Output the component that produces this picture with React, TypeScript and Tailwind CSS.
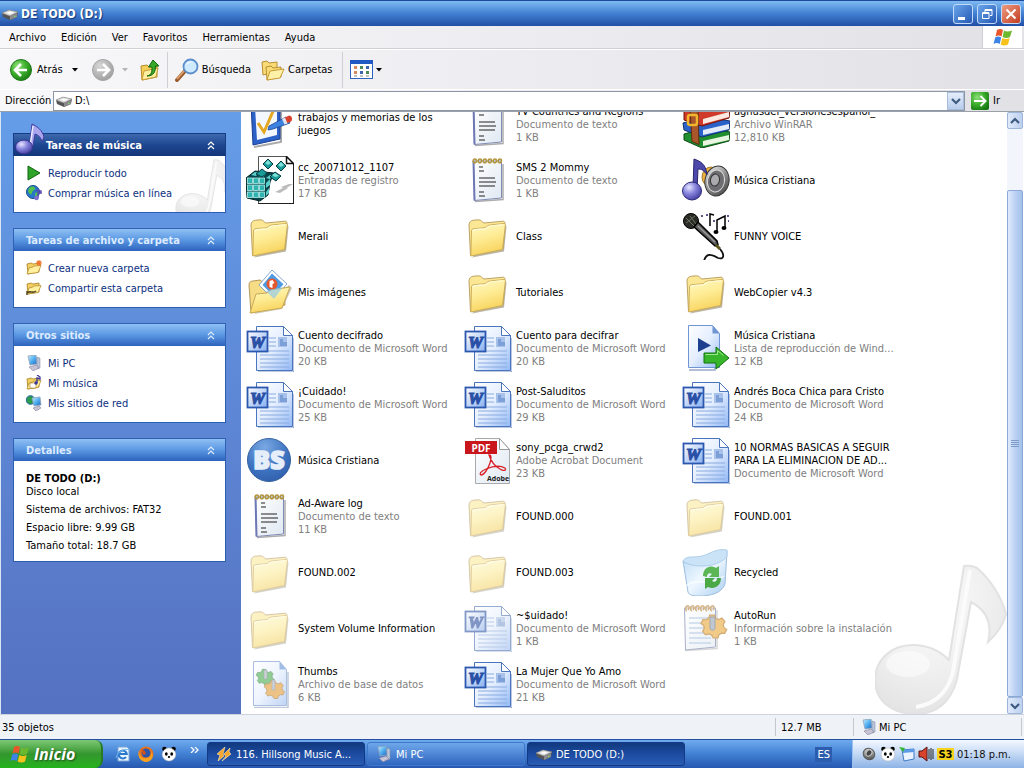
import React from 'react';

type IconName =
  | 'folder'
  | 'pictures'
  | 'word'
  | 'text'
  | 'tasks'
  | 'registry'
  | 'rar'
  | 'music'
  | 'mic'
  | 'playlist'
  | 'bs'
  | 'pdf'
  | 'recycle'
  | 'setup'
  | 'database';

interface FileItem {
  name: string;
  icon: IconName;
  type?: string;
  size?: string;
  hidden?: boolean;
}

const WORD = 'Documento de Microsoft Word';

const files: FileItem[] = [
  { name: 'trabajos y memorias de los juegos', icon: 'tasks' },
  { name: 'TV Countries and Regions', icon: 'text', type: 'Documento de texto', size: '1 KB' },
  { name: 'agnusdei_versionesespañol_', icon: 'rar', type: 'Archivo WinRAR', size: '12,810 KB' },
  { name: 'cc_20071012_1107', icon: 'registry', type: 'Entradas de registro', size: '17 KB' },
  { name: 'SMS 2 Mommy', icon: 'text', type: 'Documento de texto', size: '1 KB' },
  { name: 'Música Cristiana', icon: 'music' },
  { name: 'Merali', icon: 'folder' },
  { name: 'Class', icon: 'folder' },
  { name: 'FUNNY VOICE', icon: 'mic' },
  { name: 'Mis imágenes', icon: 'pictures' },
  { name: 'Tutoriales', icon: 'folder' },
  { name: 'WebCopier v4.3', icon: 'folder' },
  { name: 'Cuento decifrado', icon: 'word', type: WORD, size: '20 KB' },
  { name: 'Cuento para decifrar', icon: 'word', type: WORD, size: '20 KB' },
  { name: 'Música Cristiana', icon: 'playlist', type: 'Lista de reproducción de Wind...', size: '12 KB' },
  { name: '¡Cuidado!', icon: 'word', type: WORD, size: '25 KB' },
  { name: 'Post-Saluditos', icon: 'word', type: WORD, size: '29 KB' },
  { name: 'Andrés Boca Chica para Cristo', icon: 'word', type: WORD, size: '24 KB' },
  { name: 'Música Cristiana', icon: 'bs' },
  { name: 'sony_pcga_crwd2', icon: 'pdf', type: 'Adobe Acrobat Document', size: '23 KB' },
  { name: '10 NORMAS BASICAS A SEGUIR PARA LA ELIMINACION DE AD...', icon: 'word', type: WORD },
  { name: 'Ad-Aware log', icon: 'text', type: 'Documento de texto', size: '11 KB' },
  { name: 'FOUND.000', icon: 'folder', hidden: true },
  { name: 'FOUND.001', icon: 'folder', hidden: true },
  { name: 'FOUND.002', icon: 'folder', hidden: true },
  { name: 'FOUND.003', icon: 'folder', hidden: true },
  { name: 'Recycled', icon: 'recycle' },
  { name: 'System Volume Information', icon: 'folder', hidden: true },
  { name: '~$uidado!', icon: 'word', type: WORD, size: '1 KB', hidden: true },
  { name: 'AutoRun', icon: 'setup', type: 'Información sobre la instalación', size: '1 KB', hidden: true },
  { name: 'Thumbs', icon: 'database', type: 'Archivo de base de datos', size: '6 KB', hidden: true },
  { name: 'La Mujer Que Yo Amo', icon: 'word', type: WORD, size: '21 KB' },
];

const Gradients = () => (
  <svg width="0" height="0" className="absolute" aria-hidden="true">
    <defs>
      <linearGradient id="gFolder" x1="0" y1="0" x2="0.3" y2="1">
        <stop offset="0" stopColor="#fff9c4" />
        <stop offset="0.5" stopColor="#feec96" />
        <stop offset="1" stopColor="#f8d45f" />
      </linearGradient>
      <linearGradient id="gPage" x1="0" y1="0" x2="1" y2="1">
        <stop offset="0" stopColor="#ffffff" />
        <stop offset="0.5" stopColor="#e4eeff" />
        <stop offset="1" stopColor="#93b9f6" />
      </linearGradient>
      <linearGradient id="gSheet" x1="0" y1="0" x2="1" y2="1">
        <stop offset="0" stopColor="#ffffff" />
        <stop offset="1" stopColor="#dfe8f2" />
      </linearGradient>
      <linearGradient id="gWord" x1="0" y1="0" x2="1" y2="1">
        <stop offset="0" stopColor="#ffffff" />
        <stop offset="1" stopColor="#86aef0" />
      </linearGradient>
      <radialGradient id="gGreen" cx="0.35" cy="0.3" r="0.8">
        <stop offset="0" stopColor="#8fe07a" />
        <stop offset="0.5" stopColor="#3cae2c" />
        <stop offset="1" stopColor="#15750f" />
      </radialGradient>
      <radialGradient id="gGray" cx="0.35" cy="0.3" r="0.8">
        <stop offset="0" stopColor="#d6d6d6" />
        <stop offset="1" stopColor="#9b9b9b" />
      </radialGradient>
      <radialGradient id="gBs" cx="0.4" cy="0.2" r="0.9">
        <stop offset="0" stopColor="#79a8e2" />
        <stop offset="0.6" stopColor="#3d72c0" />
        <stop offset="1" stopColor="#2f5ca8" />
      </radialGradient>
      <radialGradient id="gNote" cx="0.35" cy="0.3" r="0.8">
        <stop offset="0" stopColor="#e6e6ff" />
        <stop offset="0.45" stopColor="#8683dc" />
        <stop offset="1" stopColor="#3a3596" />
      </radialGradient>
      <radialGradient id="gMark" cx="0.4" cy="0.25" r="0.8">
        <stop offset="0" stopColor="#fdfdfd" />
        <stop offset="0.6" stopColor="#efefef" />
        <stop offset="1" stopColor="#e2e2e2" />
      </radialGradient>
      <linearGradient id="gScreen" x1="0" y1="0" x2="1" y2="1">
        <stop offset="0" stopColor="#d3f1ff" />
        <stop offset="0.5" stopColor="#53b1f0" />
        <stop offset="1" stopColor="#1c66c4" />
      </linearGradient>
      <linearGradient id="gBin" x1="0" y1="0" x2="1" y2="1">
        <stop offset="0" stopColor="#b7d9f5" />
        <stop offset="0.5" stopColor="#eef7ff" />
        <stop offset="1" stopColor="#a8cdf0" />
      </linearGradient>
      <linearGradient id="gMetal" x1="0" y1="0" x2="1" y2="1">
        <stop offset="0" stopColor="#f4f4f4" />
        <stop offset="0.5" stopColor="#8c8c8c" />
        <stop offset="1" stopColor="#3d3d3d" />
      </linearGradient>
    </defs>
  </svg>
);

const gearPath =
  'M-2 -9h4l1 2.6 2.6 1 2.6-1.2 2.6 3-1.4 2.4.6 2.6 2.2 1.4-1.6 3.4-2.8-.2-2.2 1.6-.6 2.4h-4l-1.2-2.4-2.4-1-2.8.8-2.4-3 1.4-2.4-.6-2.6-2.2-1.4 1.6-3.4 2.8.2 2.2-1.6z';

const FolderShape = () => (
  <>
    <path d="M8 45.500l32-6 2.500-25-2-2" fill="#8d8468" opacity="0.6" />
    <path d="M5 13c0-3 2-4.500 4.500-4.800l5-.4c2.500-.2 3.500 2.400 5.500 3.200l19-1.800c1.500 0 2 1 2 2.500l-2 25L6.500 43.500z" fill="#fce894" stroke="#b4975a" strokeWidth="0.900" />
    <path d="M7.500 19c0-1.500 1-2.200 2.500-2.400l10-.8c2 0 3-2.500 5.500-2.800l14.500-1.500c1 0 1.500.6 1.400 1.600L38.500 37.500 6.800 44z" fill="url(#gFolder)" stroke="#c9a956" strokeWidth="0.900" />
    <path d="M8.800 19.500c.3-1.200 1-1.700 2-1.800l10-.8c2.500-.4 3-2.600 5.500-2.900l13-1.300" fill="none" stroke="#fffbd8" strokeWidth="1.200" />
  </>
);

const FileIcon = ({ name }: { name: IconName }) => {
  switch (name) {
    case 'folder':
      return <FolderShape />;
    case 'pictures':
      return (
        <>
          <path d="M8 46l28-5 10-21-3-3" fill="#8d8468" opacity="0.45" />
          <path d="M3 17c0-3 2-4 4-4l7-1 4 3 20-2 1 24L5 45z" fill="#f7dc86" stroke="#b4975a" />
          <path d="M26 2l15 14-14 15-14-14z" fill="#fff" stroke="#8aa7cc" />
          <path d="M26 5.500l11.500 10.700L27 27.500 16.500 17z" fill="#4f9be3" />
          <circle cx="26" cy="16" r="5.500" fill="#e4572c" />
          <path d="M23.500 13l3-1 2 3-2 1v4l-3-1z" fill="#fff" />
          <path d="M4 45l6-19 11-1 4-3 19-3-8 21z" fill="url(#gFolder)" stroke="#c9a956" />
          <path d="M20 23l8 8 9-12z" fill="#8cc6ee" opacity="0.65" />
        </>
      );
    case 'word':
      return (
        <>
          <path d="M12 48h36V14" fill="none" stroke="#3b62ad" strokeWidth="1" opacity="0.7" />
          <path d="M10.500 2.500h27l9 9v35h-36z" fill="url(#gPage)" stroke="#4b75bd" />
          <path d="M37.500 2.500v9h9z" fill="#fff" stroke="#4b75bd" />
          <path d="M23 14h7M23 18h7M23 22h7M14 27h29M14 31h29M14 35h29M14 39h29M14 43h29" stroke="#8aabde" strokeWidth="1" />
          <path d="M32 13h9v10h-9z" fill="#a7c1ea" />
          <path d="M34 15h3v3h4v4h-7z" fill="#7c9fd8" />
          <rect x="1.500" y="7.500" width="20" height="20" fill="url(#gWord)" stroke="#2c57ae" strokeWidth="1.800" />
          <text x="11.500" y="23.500" textAnchor="middle" fontFamily="Liberation Serif, serif" fontStyle="italic" fontWeight="700" fontSize="17" fill="#2a50a6" stroke="#2a50a6" strokeWidth="1.200">W</text>
        </>
      );
    case 'text':
      return (
        <>
          <path d="M11 45.500l28-2V8" fill="none" stroke="#777" strokeWidth="1.500" opacity="0.6" />
          <path d="M9.500 5h28v37l-27 2.500z" fill="url(#gSheet)" stroke="#7f8bb5" />
          <path d="M9.500 5l1 39.500" stroke="#6d78b4" strokeWidth="2" />
          {[11, 16, 21, 26, 31, 36].map((x) => (
            <path key={x} d={`M${x} 7c-3-1-2-4 0-4s2 3 0 4`} fill="none" stroke="#b3953c" strokeWidth="1.600" />
          ))}
          <path d="M15 11h4M15 15h5M15 22h16M15 26h17M15 30h16M15 36h5M15 40h6" stroke="#222" strokeWidth="1.200" />
        </>
      );
    case 'tasks':
      return (
        <>
          <path d="M8 47l27-5V4" fill="none" stroke="#555" strokeWidth="2" opacity="0.5" />
          <path d="M5 3l29-2v38L7 45z" fill="#2c62c8" stroke="#1a3f90" />
          <path d="M9 7l22-2v30L11 40z" fill="#f3f8ff" />
          <path d="M12 23l6 9L28 9" fill="none" stroke="#e5a823" strokeWidth="3" />
          <path d="M23 26l17-9 4 6-17 6-5 1z" fill="#3c82e0" stroke="#1b4698" strokeWidth="0.800" />
          <path d="M38 18l5-2.500c3 0 4 4 2 6l-4 1.800z" fill="#d8402c" />
          <path d="M36 19l3-1.500 2.500 6-3 1z" fill="#dfe4ee" />
        </>
      );
    case 'registry':
      return (
        <>
          <path d="M12.500.5h28l7 7v40h-35z" fill="#fff" stroke="#555" />
          <path d="M40.500.5v7h7zM48 8v40H12" fill="none" stroke="#111" strokeWidth="1.500" />
          <path d="M29 36l8-4h5l-8 5zM35 31l8-3h4l-8 5z" fill="#bbb" />
          <path d="M0 22l9-7 19 2-4 9-2 13-8 6-13-3z" fill="#06444a" stroke="#022529" />
          {[22, 29, 36].map((y) =>
            [1.5, 7.5, 13.5].map((x) => <rect key={`${x}-${y}`} x={x} y={y} width="5" height="5.500" fill="#2fb3b0" stroke="#b4efec" strokeWidth="0.800" />),
          )}
          <path d="M5 19l4-3 4 1-3 3zM12 20l4-3 4 1-3 3zM20 22l4-3 3 1-3 3zM20 27l4-4v6l-4 3zM20 36l3-4v5l-3 3z" fill="#5ccfca" />
          <path d="M22 3l5 5-5 5-5-5zM35 5l5 5-5 5-5-5zM29 16l6 4-5 5-6-4zM16 13l5 4-5 4-6-3z" fill="#1a9a99" stroke="#043c40" />
          <path d="M22 4l3 3-3 2-3-2zM35 6l3 3-3 2-3-2zM29 17l4 3-4 1-3-2z" fill="#7fe0da" />
        </>
      );
    case 'rar':
      return (
        <>
          <path d="M2 34l22-6 24 4-1 9-27 7-18-8z" fill="#1f8e2e" stroke="#0d4a15" />
          <path d="M21 41l26-6v5l-26 6z" fill="#e8f5e0" />
          <path d="M1 23l22-6 25 4-1 9-27 7-18-7z" fill="#2a62c9" stroke="#12326f" />
          <path d="M21 30l26-6v5l-26 6z" fill="#e4ecfb" />
          <path d="M2 11l22-7 24 5-1 9-27 8L2 20z" fill="#d03a2a" stroke="#721309" />
          <path d="M21 19l26-7v5l-26 7z" fill="#fbe9e2" />
          <path d="M8 9l8-2.500 1 38-7-3z" fill="#a9562a" stroke="#5f2c10" />
          <rect x="6" y="15" width="9" height="10" rx="2" fill="none" stroke="#f1b62b" strokeWidth="2.500" />
        </>
      );
    case 'music':
      return (
        <>
          <ellipse cx="29" cy="21" rx="9" ry="10" fill="#eab040" stroke="#8d6413" strokeWidth="0.800" />
          <ellipse cx="35" cy="25" rx="12" ry="15" fill="url(#gMetal)" stroke="#333" transform="rotate(12 35 25)" />
          <ellipse cx="34" cy="25" rx="8.500" ry="11" fill="#6e6e72" stroke="#d8d8d8" transform="rotate(12 34 25)" />
          <ellipse cx="33" cy="24" rx="4.500" ry="6" fill="#a9a9ae" stroke="#333" transform="rotate(12 33 24)" />
          <path d="M12 3c5 2 12 4 13 16-3-5-6-6-9-6l-1 22-4-3z" fill="#4d49ab" stroke="#29266f" />
          <ellipse cx="10" cy="35" rx="9.500" ry="9" fill="url(#gNote)" stroke="#2c2876" />
        </>
      );
    case 'mic':
      return (
        <>
          <circle cx="9" cy="9" r="7.500" fill="#2a2a26" stroke="#000" />
          <path d="M4 6l8 8M8 4l6 8M4 11l9-7" stroke="#6d7362" strokeWidth="1" />
          <path d="M12 15l4-5 19 19 1 4-3 1z" fill="#5b5b5b" stroke="#000" strokeWidth="1.500" />
          <path d="M16 14l17 16" stroke="#9a9a9a" strokeWidth="1.500" />
          <path d="M34 33l4 4" stroke="#5d571f" strokeWidth="3" />
          <path d="M38 37c5 6 4 11-2 9-7-4-12-5-14 3" fill="none" stroke="#111" strokeWidth="1.800" />
          <path d="M28 14V2l4 1M35 20V8l8-4v12" fill="none" stroke="#000" strokeWidth="1.500" />
          <ellipse cx="34" cy="20" rx="2.500" ry="2" />
          <ellipse cx="42" cy="16" rx="2.500" ry="2" />
          <path d="M19 4h2M24 3h2M31 9h2M45 4h2M46 9h1" stroke="#22226a" strokeWidth="1.500" />
        </>
      );
    case 'playlist':
      return (
        <>
          <path d="M7 46h26V12" fill="none" stroke="#5672a8" strokeWidth="1.500" opacity="0.6" />
          <path d="M6.500 1.500h24l7 8v34h-31z" fill="url(#gPage)" stroke="#6f95d2" />
          <path d="M30.500 1.500v8h7z" fill="#6f95d2" />
          <path d="M16 14l13 7.500L16 28z" fill="#1d3f8f" />
          <path d="M22 29h12v-6l13 11-13 11v-6H22z" fill="#37b52b" stroke="#13730f" />
          <path d="M23.500 30.500h12v-4l6 5" fill="none" stroke="#a0ea8e" />
        </>
      );
    case 'bs':
      return (
        <>
          <circle cx="23" cy="24" r="21.500" fill="url(#gBs)" stroke="#34619f" />
          <text x="23" y="33" textAnchor="middle" fontFamily="Open Sans, sans-serif" fontWeight="800" fontSize="25" fill="#e6eefa" stroke="#e6eefa" strokeWidth="1.500">BS</text>
        </>
      );
    case 'pdf':
      return (
        <>
          <path d="M11.500 2.500h24l10 11v34h-34z" fill="url(#gSheet)" stroke="#a9a9a9" />
          <path d="M35.500 2.500v11h10z" fill="#fff" stroke="#999" />
          <rect x="1" y="5" width="32" height="13" fill="#c9161c" />
          <text x="17" y="15.500" textAnchor="middle" fontFamily="Open Sans, sans-serif" fontWeight="700" fontSize="10" fill="#fff">PDF</text>
          <path d="M25 19c3 0 2 4 1 8-2 6-6 12-9 12-2-1 0-4 5-6 7-3 14-4 19-1 2 3-2 3-5 1-6-3-9-8-11-14z" fill="none" stroke="#d91f26" strokeWidth="1.300" />
          <text x="34" y="45" textAnchor="middle" fontFamily="Open Sans, sans-serif" fontWeight="700" fontSize="7" fill="#222">Adobe</text>
        </>
      );
    case 'recycle':
      return (
        <>
          <path d="M1 13c4 3 10 4 16 2 11-4 14-13 28-12l-2 33c-3 9-14 12-26 12-6 0-10-1-11-4z" fill="url(#gBin)" stroke="#9dbfdf" />
          <path d="M1 13C4 7 12 10 20 8c8-2 14-8 25-6v7c-7 6-14 9-24 9-8 0-15-1-20-5z" fill="#cbe3f7" stroke="#a3c6e6" strokeWidth="0.800" />
          <path d="M4 38c12-10 22 2 38-10" fill="none" stroke="#fff" strokeWidth="2" opacity="0.6" />
          <path d="M21 28c0-8 7-12 13-8l3-2v11H27l3-3c-3-2-5 0-5 3z" fill="#5cb655" />
          <path d="M39 30c0 8-7 12-13 9l-3 2V30h10l-3 3c3 2 5 0 5-3z" fill="#4aa845" />
        </>
      );
    case 'setup':
      return (
        <>
          <path d="M3 46.500l32-2V6" fill="none" stroke="#777" strokeWidth="1.500" opacity="0.5" />
          <path d="M2.500 4h31v39l-30 3z" fill="url(#gSheet)" stroke="#6f7ba8" />
          {[5, 10, 15, 20, 25, 30].map((x) => (
            <path key={x} d={`M${x} 7c-2-1-2-4 0-5s3 2 1 4`} fill="none" stroke="#c2842a" strokeWidth="1.500" />
          ))}
          <path d="M7 14h22M7 19h22M7 24h22M7 29h22M7 34h22M7 39h22" stroke="#7fa5d8" />
          <path d={gearPath} transform="translate(30 22) scale(1.200)" fill="#eda62a" stroke="#b97412" />
          <path d="M28 13h5v11c0 3-5 3-5 0z" fill="#97a3b4" stroke="#66717f" />
        </>
      );
    case 'database':
      return (
        <>
          <path d="M8 47.500h34V12" fill="none" stroke="#4e6b9c" strokeWidth="1.500" opacity="0.6" />
          <path d="M7.500 1.500h26l7 8v36h-33z" fill="url(#gPage)" stroke="#6f95d2" />
          <path d="M33.500 1.500v8h7z" fill="#5f92dc" />
          <path d={gearPath} transform="translate(18 17) scale(0.850)" fill="#3fae45" stroke="#21742a" strokeWidth="0.800" />
          <path d={gearPath} transform="translate(27 29) scale(0.950)" fill="#e79a2c" stroke="#a8660f" strokeWidth="0.800" />
          <path d="M18 10h3v9h-3zM26 20h3v10h-3z" fill="#aab2bd" stroke="#6d7683" strokeWidth="0.500" />
        </>
      );
  }
};

const MusicNote = ({ className }: { className: string }) => (
  <svg viewBox="0 0 132 150" className={className} aria-hidden="true">
    <path d="M89 2c5-1 9 0 13 2 14 12 25 30 29 46-3 12-9 20-18 28 5-20-2-32-17-40l-12 66c-3 28-18 46-43 46C16 150 0 136 0 116c0-20 16-35 38-35 14 0 26 5 36 15z" fill="url(#gMark)" stroke="#e2e2e2" strokeWidth="2" />
    <path d="M95 6L79 102c-3 22-16 38-38 41" fill="none" stroke="#fbfbfb" strokeWidth="4" />
    <ellipse cx="33" cy="100" rx="22" ry="13" fill="#fff" opacity="0.5" />
  </svg>
);

const DriveIcon = () => (
  <svg viewBox="0 0 16 16" className="size-4 shrink-0" aria-hidden="true">
    <path d="M0 7l7-3 9 2-1 5-7 3-7-3z" fill="#555" />
    <path d="M0 7l7-3 9 2-8 4z" fill="#d9d9d9" stroke="#8b8b8b" strokeWidth="0.500" />
    <path d="M4 7l4-1.500 4 1L8 8z" fill="#fff" />
    <path d="M8 10l7-3v4l-7 3z" fill="#8a8a8a" />
    <path d="M12 10.500h1.500" stroke="#6de05e" />
  </svg>
);

const PcIcon = () => (
  <svg viewBox="0 0 16 16" className="size-4 shrink-0" aria-hidden="true">
    <path d="M2 1l8-1 1 9-7 1z" fill="url(#gScreen)" stroke="#8fa3bd" strokeWidth="0.800" />
    <path d="M11 2l3 1v10l-3 1z" fill="#b8c3d6" stroke="#7d8ba5" strokeWidth="0.500" />
    <path d="M3 12l7-2 3 3-6 3z" fill="#c7c3d6" stroke="#77708d" strokeWidth="0.500" />
  </svg>
);

const PandaIcon = () => (
  <svg viewBox="0 0 16 16" className="size-4 shrink-0" aria-hidden="true">
    <circle cx="3.500" cy="3" r="2.300" />
    <circle cx="12.500" cy="3" r="2.300" />
    <ellipse cx="8" cy="8.500" rx="6.800" ry="6.500" fill="#fff" stroke="#bbb" strokeWidth="0.500" />
    <ellipse cx="5.300" cy="8" rx="1.400" ry="1.800" />
    <ellipse cx="10.700" cy="8" rx="1.400" ry="1.800" />
    <ellipse cx="8" cy="11" rx="1.200" ry="0.900" />
  </svg>
);

const WindowsFlag = ({ className }: { className: string }) => (
  <svg viewBox="0 0 20 18" className={className} aria-hidden="true">
    <path d="M4 2c2-1.500 4-1.500 6 0L8.500 8.500c-2-1.300-4-1.300-6 0z" fill="#e8562a" />
    <path d="M11 2.500c2 1.200 4.500 1.200 8 0L17 9c-2.500 1.300-5 1.200-7.400 0z" fill="#6cb82f" />
    <path d="M2.200 9.500c2-1.300 4-1.300 6 0L6.700 16c-2-1.300-4-1.300-6.200 0z" fill="#3e83e6" />
    <path d="M9.300 10c2.300 1.300 5 1.300 7.400 0L15 16.500c-2.500 1.500-5 1.300-7.300 0z" fill="#f8c21c" />
  </svg>
);

const Caret = ({ className = '' }: { className?: string }) => (
  <svg viewBox="0 0 6 4" className={`h-1 w-1.5 ${className}`} aria-hidden="true">
    <path d="M0 0h6L3 3.500z" fill="currentColor" />
  </svg>
);

const Chevron = ({ up }: { up?: boolean }) => (
  <svg viewBox="0 0 10 8" className="h-2 w-2.5" aria-hidden="true">
    <path d={up ? 'M1 6l4-4 4 4' : 'M1 2l4 4 4-4'} fill="none" stroke="#3f5a80" strokeWidth="2.200" />
  </svg>
);

const PlayIcon = () => (
  <svg viewBox="0 0 16 16" className="size-4" aria-hidden="true">
    <path d="M2 1l12 7L2 15z" fill="#2fa52a" stroke="#126512" />
  </svg>
);

const GlobeNoteIcon = () => (
  <svg viewBox="0 0 16 16" className="size-4" aria-hidden="true">
    <circle cx="7" cy="7" r="6.500" fill="#2877c9" stroke="#174a8b" />
    <path d="M3 3c2-2 5-2 6 0s-3 2-3 5-4 0-4-2zM9 8l3-1v3l-3 2z" fill="#52c04f" />
    <path d="M10 5l5 1v2l-3-.5V13" fill="none" stroke="#5b4bb0" strokeWidth="1.500" />
    <circle cx="10.500" cy="13" r="2.300" fill="#7f70cf" />
  </svg>
);

const SmallFolder = ({ kind }: { kind: 'new' | 'share' | 'music' }) => (
  <svg viewBox="0 0 16 16" className="size-4" aria-hidden="true">
    <path d="M1 4l4-1 2 1 6-1v9L2 14z" fill="#f2cf62" stroke="#a87d1e" strokeWidth="0.800" />
    <path d="M1 14l2-6 4-1 1-1 7-.5-3 7z" fill="#fff0a0" stroke="#b98f32" strokeWidth="0.800" />
    {kind === 'new' && <path d="M13 0v6M10 3h6M11 1l4 4M15 1l-4 4" stroke="#f0722a" strokeWidth="1.100" />}
    {kind === 'share' && <path d="M1 13c3-3 6 1 9-2M1 11v4" fill="none" stroke="#5a4a20" strokeWidth="1.500" />}
    {kind === 'music' && (
      <>
        <path d="M4 8h6v5H4z" fill="#fff" stroke="#a87d1e" strokeWidth="0.600" />
        <path d="M11 0l3 2v2l-3-1v5" fill="none" stroke="#3c3798" strokeWidth="1.300" />
        <circle cx="10" cy="8" r="1.700" fill="#3c3798" />
      </>
    )}
  </svg>
);

const NetworkIcon = () => (
  <svg viewBox="0 0 16 16" className="size-4" aria-hidden="true">
    <circle cx="4.500" cy="5" r="4.300" fill="#2f9b4e" stroke="#1c63a5" />
    <path d="M6 3l8-1 1 8-7 1z" fill="url(#gScreen)" stroke="#8fa3bd" strokeWidth="0.800" />
    <path d="M7 13l6-2 2 2-5 3z" fill="#c7c3d6" stroke="#77708d" strokeWidth="0.500" />
  </svg>
);

interface PanelProps {
  title: string;
  main?: boolean;
  children: React.ReactNode;
}

const Panel = ({ title, main, children }: PanelProps) => (
  <section className="relative">
    <h2
      className={`flex h-[23px] items-center justify-between border border-b-0 pt-px pr-2 text-[11px] font-bold ${
        main
          ? 'border-[#153c84] bg-linear-to-b from-[#3f69ae] via-[#1d4790] to-[#12357a] pl-8 text-white'
          : 'border-[#2f61b5] bg-linear-to-b from-[#8fc0f4] via-[#5a97e2] to-[#2e63bd] pl-3 text-[#dcebff]'
      }`}
    >
      {title}
      <button aria-label={`Contraer ${title}`} className="p-0.5">
        <svg viewBox="0 0 8 9" className="h-[9px] w-2" aria-hidden="true">
          <path d="M1 4l3-3 3 3M1 8l3-3 3 3" fill="none" stroke="currentColor" strokeWidth="1.200" />
        </svg>
      </button>
    </h2>
    {main && (
      <svg viewBox="0 0 30 32" className="absolute -top-2.5 left-0.5 h-8 w-[30px]" aria-hidden="true">
        <path d="M17 1c6 3 10 6 12 13l-2 5c-1-5-4-7-7-8l-2 12-4 2z" fill="#a9a6ee" stroke="#403b9c" />
        <path d="M18 3l-3 20" stroke="#e9e9ff" strokeWidth="1.500" />
        <ellipse cx="9" cy="24" rx="8.500" ry="7" fill="url(#gNote)" stroke="#37328f" />
      </svg>
    )}
    <div className="relative overflow-hidden border border-t-0 border-[#2b5db3] bg-white">{children}</div>
  </section>
);

const TaskLink = ({ icon, children }: { icon: React.ReactNode; children: React.ReactNode }) => (
  <li>
    <a href="#" className="flex h-5 items-center gap-1.5 text-[#0b2f80]">
      {icon}
      {children}
    </a>
  </li>
);

const TaskList = ({ children }: { children: React.ReactNode }) => (
  <ul className="relative px-3 pt-[7px] pb-[9px]">{children}</ul>
);

const Sidebar = () => (
  <aside className="flex w-[241px] shrink-0 flex-col gap-[15px] border-l border-[#dbe6f5] bg-linear-to-b from-[#659de8] to-[#5571c1] pt-[21px] pr-[15px] pl-3">
    <Panel title="Tareas de música" main>
      <MusicNote className="absolute top-[3px] -right-2 h-16 w-[58px]" />
      <TaskList>
        <TaskLink icon={<PlayIcon />}>Reproducir todo</TaskLink>
        <TaskLink icon={<GlobeNoteIcon />}>Comprar música en línea</TaskLink>
      </TaskList>
    </Panel>
    <Panel title="Tareas de archivo y carpeta">
      <TaskList>
        <TaskLink icon={<SmallFolder kind="new" />}>Crear nueva carpeta</TaskLink>
        <TaskLink icon={<SmallFolder kind="share" />}>Compartir esta carpeta</TaskLink>
      </TaskList>
    </Panel>
    <Panel title="Otros sitios">
      <TaskList>
        <TaskLink icon={<PcIcon />}>Mi PC</TaskLink>
        <TaskLink icon={<SmallFolder kind="music" />}>Mi música</TaskLink>
        <TaskLink icon={<NetworkIcon />}>Mis sitios de red</TaskLink>
      </TaskList>
    </Panel>
    <Panel title="Detalles">
      <div className="flex flex-col gap-[5px] px-3 pt-[11px] pb-[9px]">
        <p>
          <strong className="block">DE TODO (D:)</strong>
          Disco local
        </p>
        <p>Sistema de archivos: FAT32</p>
        <p>Espacio libre: 9.99 GB</p>
        <p>Tamaño total: 18.7 GB</p>
      </div>
    </Panel>
  </aside>
);

const TitleBar = () => {
  const control = 'flex size-5 items-center justify-center rounded-[3px] border border-[#c3dbf8]';
  return (
    <header className="flex h-[26px] items-center gap-[3px] border-t border-[#1f4a9c] bg-linear-to-b from-[#7fbaf3] via-[#4180d2] to-[#234fa6] pr-[3px] pl-0.5">
      <DriveIcon />
      <h1 className="flex-1 text-xs font-bold text-white [text-shadow:1px_1px_1px_#153a80]">DE TODO (D:)</h1>
      <button aria-label="Minimizar" className={`${control} bg-linear-to-br from-[#6aa5ea] to-[#2659b5]`}>
        <svg viewBox="0 0 16 16" className="size-4"><path d="M3 11h7v3H3z" fill="#fff" /></svg>
      </button>
      <button aria-label="Restaurar" className={`${control} ml-px bg-linear-to-br from-[#6aa5ea] to-[#2659b5]`}>
        <svg viewBox="0 0 16 16" className="size-4" fill="none" stroke="#fff"><path d="M6 6V3.500h7v6h-2" /><path d="M3.500 6.500h6.500v6H3.500zM3.500 7.500H10M6 4.500h7" /></svg>
      </button>
      <button aria-label="Cerrar" className={`${control} ml-px bg-linear-to-br from-[#ee9a80] to-[#c13a1c]`}>
        <svg viewBox="0 0 16 16" className="size-4"><path d="M3.500 3.500l9 9M12.500 3.500l-9 9" stroke="#fff" strokeWidth="2" /></svg>
      </button>
    </header>
  );
};

const MenuBar = () => (
  <div className="flex h-[23px] border-b border-[#cfcfd4]">
    <nav className="flex flex-1 items-center gap-[15px] pl-[9px]">
      {['Archivo', 'Edición', 'Ver', 'Favoritos', 'Herramientas', 'Ayuda'].map((item) => (
        <button key={item}>{item}</button>
      ))}
    </nav>
    <div className="mr-0.5 flex w-10 items-center justify-center border-l border-[#cfcfd4] bg-white">
      <WindowsFlag className="h-[18px] w-5" />
    </div>
  </div>
);

const ToolBar = () => (
  <div className="flex h-10 items-center border-t border-white pl-2.5">
    <button className="flex items-center gap-[5px]">
      <svg viewBox="0 0 22 22" className="size-[22px]" aria-hidden="true">
        <circle cx="11" cy="11" r="10.500" fill="url(#gGreen)" stroke="#1c7a17" />
        <path d="M11 5l-6 6 6 6M5.500 11H17" fill="none" stroke="#fff" strokeWidth="2.600" />
      </svg>
      Atrás
      <Caret className="ml-1" />
    </button>
    <button aria-label="Adelante" className="ml-3.5 flex items-center gap-2">
      <svg viewBox="0 0 22 22" className="size-[22px]" aria-hidden="true">
        <circle cx="11" cy="11" r="10.500" fill="url(#gGray)" stroke="#a3a3a3" />
        <path d="M11 5l6 6-6 6M16.500 11H5" fill="none" stroke="#fff" strokeWidth="2.600" />
      </svg>
      <Caret className="text-[#b5b5b8]" />
    </button>
    <button aria-label="Arriba" className="ml-3">
      <svg viewBox="0 0 20 24" className="h-6 w-5" aria-hidden="true">
        <path d="M1 8l6-1 2 2 8-1v11L2 22z" fill="#f4cf58" stroke="#b78a26" />
        <path d="M2 22l2-9 14-3-2 9z" fill="#fff0a0" stroke="#c79c35" />
        <path d="M7 18c5-1 5-5 5-9H8.500L13 2l6 6h-3.500c0 6-2 10-8.500 10z" fill="#36a82a" stroke="#14660f" />
      </svg>
    </button>
    <span className="mx-[7px] h-9 w-px bg-[#cfcfd4]" />
    <button className="flex items-center gap-[3px]">
      <svg viewBox="0 0 24 24" className="size-6" aria-hidden="true">
        <path d="M2 22l8-9" stroke="#9c5a2c" strokeWidth="4" strokeLinecap="round" />
        <path d="M2 21l7-8" stroke="#e4a873" strokeWidth="1.500" />
        <circle cx="15.500" cy="8.500" r="7" fill="#cfeaff" stroke="#5a8fcb" strokeWidth="1.800" />
        <path d="M11 7c1-3 4-4 7-3-3 0-5 1-7 3z" fill="#fff" />
      </svg>
      Búsqueda
    </button>
    <button className="ml-2.5 flex items-center gap-[3px]">
      <svg viewBox="0 0 24 22" className="h-[22px] w-6" aria-hidden="true">
        <path d="M1 3l5-1 2 2 8-1v10L2 16z" fill="#f8da76" stroke="#b98f32" />
        <path d="M5 8l5-1 2 2 8-1v10L6 21z" fill="#f8da76" stroke="#b98f32" />
        <path d="M6 21l3-9 14-2-4 9z" fill="#fff2a8" stroke="#c79c35" />
      </svg>
      Carpetas
    </button>
    <span className="mr-[7px] ml-2.5 h-9 w-px bg-[#cfcfd4]" />
    <button aria-label="Vistas" className="flex items-center gap-[3px]">
      <svg viewBox="0 0 23 19" className="h-[19px] w-[23px]" aria-hidden="true">
        <rect x="0.500" y="0.500" width="22" height="18" fill="#fff" stroke="#2c62c0" />
        <path d="M0 0h23v4H0z" fill="#2058c4" />
        <path d="M4 6h3v3H4zM4 11h3v3H4z" fill="#d88a5a" />
        <path d="M10 6h3v3h-3zM16 11h3v3h-3z" fill="#4a8a5c" />
        <path d="M16 6h3v3h-3zM10 11h3v3h-3z" fill="#3f64b4" />
        <path d="M4 16h3M10 16h3M16 16h3" stroke="#888" />
      </svg>
      <Caret />
    </button>
  </div>
);

const AddressBar = () => (
  <form className="flex h-[23px] items-center border-y border-t-white border-b-[#9aa0a8] pl-[5px]">
    <label htmlFor="address" className="w-12 shrink-0">Dirección</label>
    <div className="flex h-5 min-w-0 flex-1 items-center border border-[#8c97a8] bg-white pl-0.5">
      <DriveIcon />
      <input id="address" defaultValue="D:\" className="min-w-0 flex-1 pl-[3px] outline-none" />
      <button type="button" aria-label="Mostrar direcciones" className="flex h-full w-[17px] items-center justify-center border border-[#a9bddb] bg-linear-to-b from-[#e4edfb] to-[#b8cdec]">
        <Chevron />
      </button>
    </div>
    <button type="button" className="flex w-[59px] shrink-0 items-center gap-1 pl-1.5">
      <svg viewBox="0 0 18 18" className="size-[18px]" aria-hidden="true">
        <rect width="18" height="18" rx="2" fill="url(#gGreen)" />
        <path d="M3 9h11M9.500 4l5 5-5 5" fill="none" stroke="#fff" strokeWidth="2" />
      </svg>
      Ir
    </button>
  </form>
);

const FileEntry = ({ file }: { file: FileItem }) => (
  <li className="flex h-14 items-center gap-1">
    <svg viewBox="0 0 48 48" className={`size-12 shrink-0 ${file.hidden ? 'opacity-60 saturate-90' : ''}`} aria-hidden="true">
      <FileIcon name={file.icon} />
    </svg>
    <div className="w-[162px]">
      <p>{file.name}</p>
      {file.type && <p className="whitespace-nowrap text-[#808080]">{file.type}</p>}
      {file.size && <p className="text-[#808080]">{file.size}</p>}
    </div>
  </li>
);

const ScrollBar = () => {
  const arrow = 'flex h-[17px] shrink-0 items-center justify-center rounded-xs border border-[#9db5d8] bg-linear-to-r from-[#dfeafa] to-[#bdd0ee]';
  return (
    <div className="mr-px flex w-4 shrink-0 flex-col bg-[#f2f5fc]">
      <button aria-label="Subir" className={arrow}><Chevron up /></button>
      <div className="flex-[61]" />
      <div className="flex flex-[507] flex-col items-center justify-center gap-px rounded-xs border border-[#8ba9d6] bg-linear-to-r from-[#e0ebfc] via-[#bcd2f4] to-[#a5c0ea]">
        <span className="h-px w-2 bg-[#7f9cc8]" />
        <span className="h-px w-2 bg-[#7f9cc8]" />
        <span className="h-px w-2 bg-[#7f9cc8]" />
        <span className="h-px w-2 bg-[#7f9cc8]" />
      </div>
      <button aria-label="Bajar" className={arrow}><Chevron /></button>
    </div>
  );
};

// The list is scrolled to its end, so the rows are held against the bottom edge.
const FilePane = () => (
  <main className="relative flex min-w-0 flex-1 flex-col justify-end overflow-hidden bg-white pb-0.5 pl-[5px]">
    <MusicNote className="absolute right-0 bottom-0 h-[150px] w-[132px]" />
    <ul className="relative grid grid-cols-[repeat(auto-fill,218px)]">
      {files.map((file, i) => (
        <FileEntry key={i} file={file} />
      ))}
    </ul>
  </main>
);

const StatusBar = () => (
  <footer className="flex h-[25px] items-center border-t border-[#cdd3dc] bg-[#eff2f7]">
    <span className="flex-1 pl-0.5">35 objetos</span>
    <span className="flex h-[18px] w-[78px] items-center border-l border-[#c3c7ce] pl-[5px]">12.7 MB</span>
    <span className="mr-0.5 flex h-[18px] w-[169px] items-center gap-0.5 border-x border-[#c3c7ce] pl-[7px]">
      <PcIcon />
      Mi PC
    </span>
  </footer>
);

const TaskButton = ({ icon, label, active }: { icon: React.ReactNode; label: string; active?: boolean }) => (
  <button
    className={`flex h-6 w-[158px] items-center gap-1 rounded-[3px] border px-2 text-white ${
      active ? 'border-[#123a86] bg-linear-to-b from-[#12397f] via-[#1c4ba0] to-[#2a5cb4]' : 'border-[#3f78c8] bg-linear-to-b from-[#6fa7ea] to-[#3066bf]'
    }`}
  >
    {icon}
    {label}
  </button>
);

const TaskBar = () => (
  <footer className="flex h-[29px] items-center border-t border-[#24509f] bg-linear-to-b from-[#6fabee] via-[#4180d3] to-[#2757b0]">
    <button className="flex h-full w-[103px] items-center gap-1 rounded-r-lg border-r-2 border-[#2a7a24] bg-linear-to-b from-[#7cc973] via-[#33962d] to-[#23b31b] pl-2.5 font-[Open_Sans,sans-serif] text-base font-bold text-white italic [text-shadow:1px_1px_2px_#1d4d18]">
      <WindowsFlag className="h-[18px] w-5" />
      Inicio
    </button>
    <div className="flex flex-1 items-center gap-[7px] pl-3">
      <button aria-label="Internet Explorer">
        <svg viewBox="0 0 16 16" className="size-4" aria-hidden="true">
          <path d="M3 1h9l2 2v12H3z" fill="#eaf4ff" stroke="#7aa6d8" />
          <path d="M11 11a4 4 0 1 1 .8-3H5" fill="none" stroke="#2a78cc" strokeWidth="2" />
          <path d="M1 12C2 6 9 2 15 4" fill="none" stroke="#6fb7f0" />
        </svg>
      </button>
      <button aria-label="Firefox">
        <svg viewBox="0 0 16 16" className="size-4" aria-hidden="true">
          <circle cx="8" cy="8" r="7.500" fill="#e8731c" />
          <circle cx="8" cy="7" r="4.500" fill="#2e56a8" />
          <path d="M1 4c0 6 3 9 8 8 3-1 5-3 4-7 4 6 0 11-5 11S-1 11 1 4z" fill="#f7a11e" />
          <path d="M3 3l4 2 1 3-3 1z" fill="#d4521a" />
        </svg>
      </button>
      <button aria-label="Panda"><PandaIcon /></button>
      <button aria-label="Más iconos" className="mb-2 ml-1.5 text-white">
        <svg viewBox="0 0 9 6" className="h-1.5 w-[9px]" aria-hidden="true">
          <path d="M1 0l3 3-3 3M5 0l3 3-3 3" fill="none" stroke="currentColor" strokeWidth="1.300" />
        </svg>
      </button>
      <div className="ml-px flex gap-0.5">
        <TaskButton
          active
          label="116. Hillsong Music A..."
          icon={
            <svg viewBox="0 0 16 16" className="size-4" aria-hidden="true">
              <path d="M9 1L1 8l3 1-2 6 6-5-1-2zM14 2L8 8l2 2-4 5 9-7-2-2z" fill="#f8a52c" stroke="#ffe9b0" strokeWidth="0.600" />
            </svg>
          }
        />
        <TaskButton label="Mi PC" icon={<PcIcon />} />
        <TaskButton label="DE TODO (D:)" icon={<DriveIcon />} active />
      </div>
    </div>
    <button className="mr-5 bg-[#2c5cae] px-0.5 py-px text-white">ES</button>
    <div className="flex h-full w-[172px] items-center gap-[3px] border-l border-[#9cc2f2] bg-linear-to-b from-[#f3f8ff] via-[#c3d8f4] to-[#8db3e6] pl-2">
      <svg viewBox="0 0 16 16" className="size-4" aria-hidden="true">
        <ellipse cx="8" cy="8" rx="6" ry="5.500" fill="url(#gMetal)" stroke="#555" transform="rotate(40 8 8)" />
        <ellipse cx="8" cy="7" rx="2.600" ry="3.300" fill="#444" stroke="#ccc" transform="rotate(40 8 7)" />
      </svg>
      <PandaIcon />
      <svg viewBox="0 0 16 16" className="size-4" aria-hidden="true">
        <path d="M3 4l12-1v10L5 15z" fill="#eaf3ff" stroke="#3f78c8" />
        <path d="M3 4l12-1v3L4 7z" fill="#5c9ae6" />
        <path d="M0 1l6 1-2 4z" fill="#35b52d" />
      </svg>
      <svg viewBox="0 0 16 16" className="size-4" aria-hidden="true">
        <path d="M1 5h3l5-4v14l-5-4H1z" fill="#d8452c" stroke="#511" />
        <path d="M11 3v10M13 2v12M15 3v10" stroke="#222" />
      </svg>
      <svg viewBox="0 0 17 12" className="h-3 w-[17px]" aria-hidden="true">
        <rect width="17" height="12" fill="#f6d21c" />
        <text x="8.500" y="10" textAnchor="middle" fontFamily="DejaVu Sans, sans-serif" fontWeight="700" fontSize="10">S3</text>
      </svg>
      <time className="whitespace-nowrap text-[#111]">01:18 p.m.</time>
    </div>
  </footer>
);

const App: React.FC = () => (
  <div className="flex h-screen flex-col overflow-hidden bg-white font-['DejaVu_Sans_Condensed','DejaVu_Sans',sans-serif] text-[11px] leading-[13px] text-black">
    <Gradients />
    <TitleBar />
    <div className="bg-linear-to-r from-[#f8f8fa] to-[#e2e1e6]">
      <MenuBar />
      <ToolBar />
      <AddressBar />
    </div>
    <div className="flex min-h-0 flex-1">
      <Sidebar />
      <FilePane />
      <ScrollBar />
    </div>
    <StatusBar />
    <TaskBar />
  </div>
);

export default App;
